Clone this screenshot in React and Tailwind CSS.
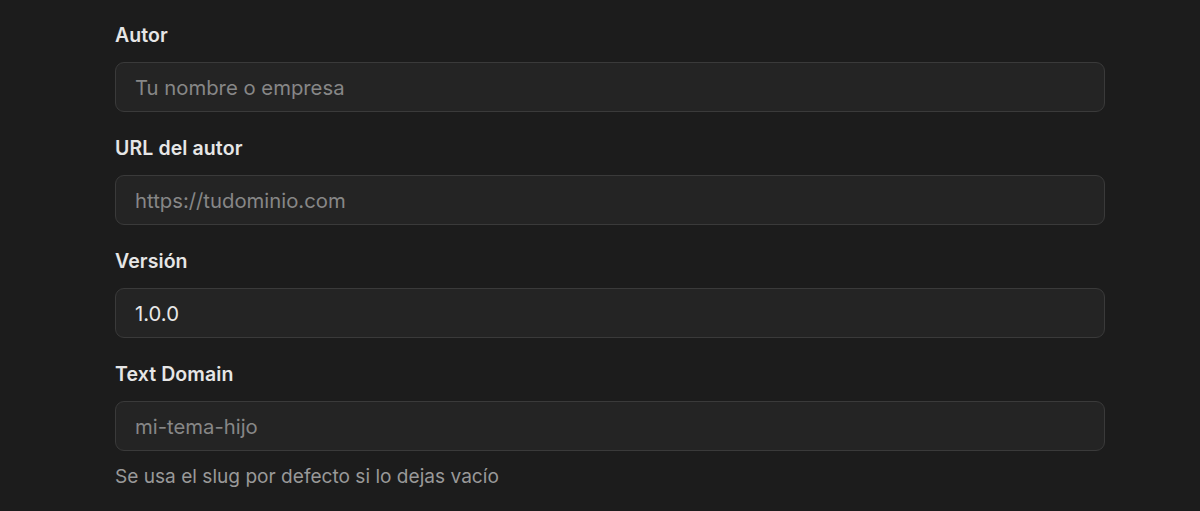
import { useState } from 'react'

const FIELDS = [
  { id: 'author', label: 'Autor', placeholder: 'Tu nombre o empresa', value: '' },
  { id: 'author_url', label: 'URL del autor', placeholder: 'https://tudominio.com', value: '' },
  { id: 'version', label: 'Versión', placeholder: '', value: '1.0.0' },
  { id: 'text_domain', label: 'Text Domain', placeholder: 'mi-tema-hijo', value: '', help: 'Se usa el slug por defecto si lo dejas vacío' },
]

export default function App() {
  const [values, setValues] = useState(() =>
    Object.fromEntries(FIELDS.map((f) => [f.id, f.value]))
  )

  return (
    <div className="min-h-[511px] bg-[#1c1c1c] font-['Inter',sans-serif] pt-[22px] pl-[115px]">
      <div className="w-[990px] flex flex-col gap-[23px]">
        {FIELDS.map((f) => (
          <div key={f.id}>
            <label htmlFor={f.id} className="block text-[19.5px] leading-[26px] font-semibold tracking-[0.1px] text-[#e6e6e6] mb-[14px]">
              {f.label}
            </label>
            <input id={f.id} type="text" placeholder={f.placeholder}
              value={values[f.id]}
              onChange={(e) => setValues((prev) => ({ ...prev, [f.id]: e.target.value }))}
              className="w-full h-[50px] rounded-[9px] border border-[#3a3a3a] bg-[#242424] px-[19px] text-[20.3px] text-[#e8e8e8] placeholder:text-[#878787] focus:outline-none" />
            {f.help && (
              <p className="mt-[12px] text-[19.1px] leading-[26px] text-[#999999]">{f.help}</p>
            )}
          </div>
        ))}
      </div>
    </div>
  )
}
